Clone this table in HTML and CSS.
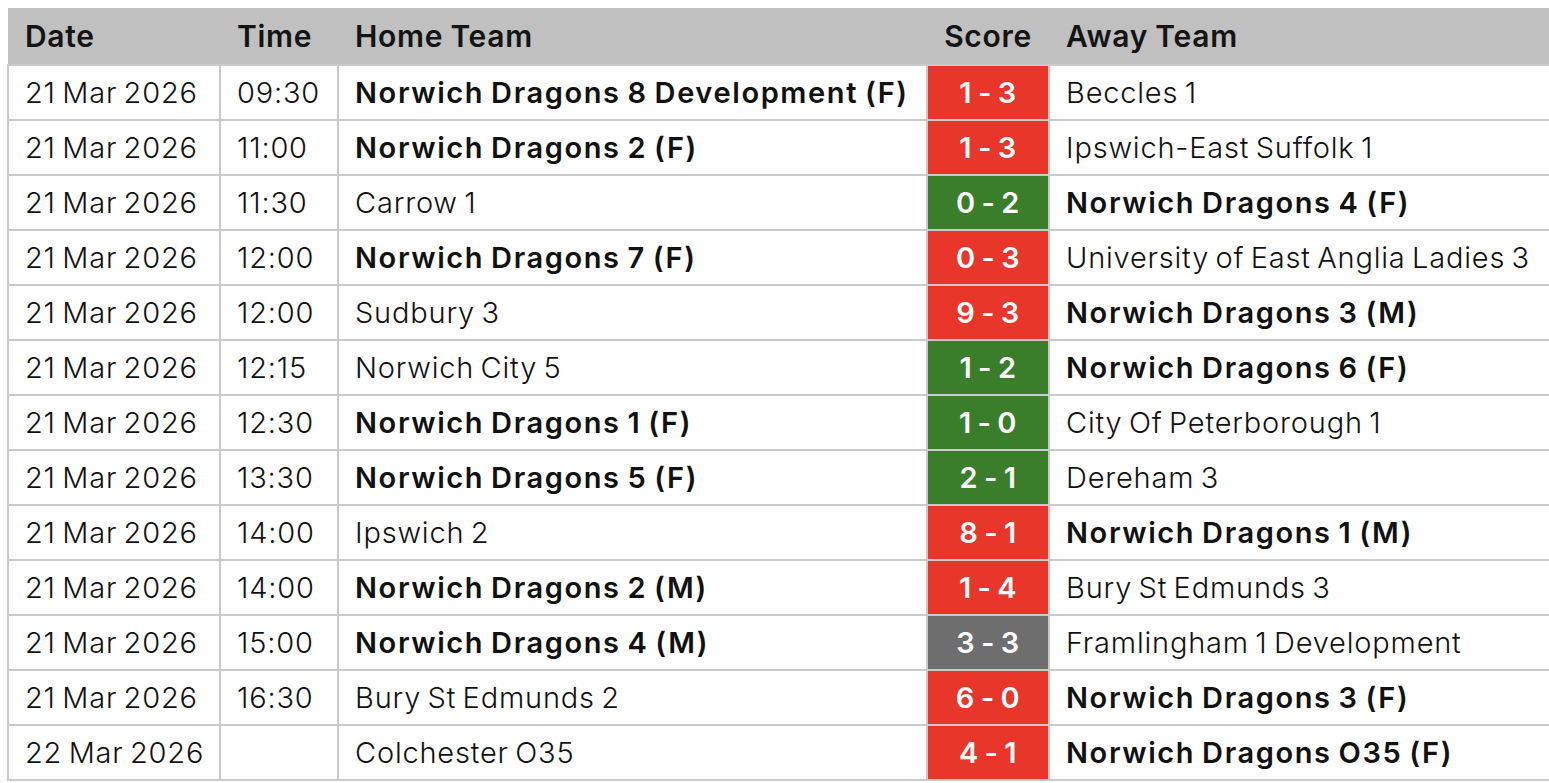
FILE: index.html
```html
<!DOCTYPE html>
<html lang="en">
<head>
<meta charset="utf-8">
<title>Fixtures</title>
<link rel="stylesheet" href="styles.css">
</head>
<body>
<table class="fixtures">
  <colgroup>
    <col class="c-date"><col class="c-time"><col class="c-home"><col class="c-score"><col class="c-away">
  </colgroup>
  <thead>
    <tr><th>Date</th><th>Time</th><th>Home Team</th><th class="score-h">Score</th><th>Away Team</th></tr>
  </thead>
  <tbody>
    <tr><td>21 Mar 2026</td><td>09:30</td><td class="us">Norwich Dragons 8 Development (F)</td><td class="score loss">1 - 3</td><td>Beccles 1</td></tr>
    <tr><td>21 Mar 2026</td><td>11:00</td><td class="us">Norwich Dragons 2 (F)</td><td class="score loss">1 - 3</td><td>Ipswich-East Suffolk 1</td></tr>
    <tr><td>21 Mar 2026</td><td>11:30</td><td>Carrow 1</td><td class="score win">0 - 2</td><td class="us">Norwich Dragons 4 (F)</td></tr>
    <tr><td>21 Mar 2026</td><td>12:00</td><td class="us">Norwich Dragons 7 (F)</td><td class="score loss">0 - 3</td><td>University of East Anglia Ladies 3</td></tr>
    <tr><td>21 Mar 2026</td><td>12:00</td><td>Sudbury 3</td><td class="score loss">9 - 3</td><td class="us">Norwich Dragons 3 (M)</td></tr>
    <tr><td>21 Mar 2026</td><td>12:15</td><td>Norwich City 5</td><td class="score win">1 - 2</td><td class="us">Norwich Dragons 6 (F)</td></tr>
    <tr><td>21 Mar 2026</td><td>12:30</td><td class="us">Norwich Dragons 1 (F)</td><td class="score win">1 - 0</td><td>City Of Peterborough 1</td></tr>
    <tr><td>21 Mar 2026</td><td>13:30</td><td class="us">Norwich Dragons 5 (F)</td><td class="score win">2 - 1</td><td>Dereham 3</td></tr>
    <tr><td>21 Mar 2026</td><td>14:00</td><td>Ipswich 2</td><td class="score loss">8 - 1</td><td class="us">Norwich Dragons 1 (M)</td></tr>
    <tr><td>21 Mar 2026</td><td>14:00</td><td class="us">Norwich Dragons 2 (M)</td><td class="score loss">1 - 4</td><td>Bury St Edmunds 3</td></tr>
    <tr><td>21 Mar 2026</td><td>15:00</td><td class="us">Norwich Dragons 4 (M)</td><td class="score draw">3 - 3</td><td>Framlingham 1 Development</td></tr>
    <tr><td>21 Mar 2026</td><td>16:30</td><td>Bury St Edmunds 2</td><td class="score loss">6 - 0</td><td class="us">Norwich Dragons 3 (F)</td></tr>
    <tr><td>22 Mar 2026</td><td></td><td>Colchester O35</td><td class="score loss">4 - 1</td><td class="us">Norwich Dragons O35 (F)</td></tr>
  </tbody>
</table>
</body>
</html>
```
FILE: styles.css
```css
html, body {
  margin: 0;
  padding: 0;
  background: #ffffff;
}
body {
  padding: 8px 0 0 7px;
  font-family: Inter, "Noto Sans", sans-serif;
  color: #111111;
}
.fixtures {
  border-collapse: collapse;
  table-layout: fixed;
  width: 1560px;
}
.c-date { width: 212px; }
.c-time { width: 118px; }
.c-home { width: 589px; }
.c-score { width: 122px; }
.c-away { width: 519px; }

.fixtures th {
  background: #c0c0c0;
  height: 56px;
  padding: 0 0 0 17px;
  text-align: left;
  font-size: 30px;
  font-weight: 600;
  letter-spacing: 0.7px;
  word-spacing: -1px;
  color: #141414;
  border: none;
}
.fixtures th.score-h {
  text-align: center;
  padding: 0;
}
.fixtures td {
  height: 53px;
  padding: 0 0 0 16px;
  border: 2px solid #cacaca;
  font-size: 29px;
  font-weight: 300;
  white-space: nowrap;
  overflow: hidden;
  letter-spacing: 0.8px;
  word-spacing: -2.5px;
}
.fixtures td.us {
  font-weight: 600;
  letter-spacing: 1.6px;
  word-spacing: -2px;
}
.fixtures td.score {
  padding: 0;
  text-align: center;
  color: #ffffff;
  font-weight: 600;
  letter-spacing: 0.5px;
  word-spacing: -2px;
}
.loss { background: #e8362a; }
.win { background: #3a7d2a; }
.draw { background: #6e6e6e; }
```
